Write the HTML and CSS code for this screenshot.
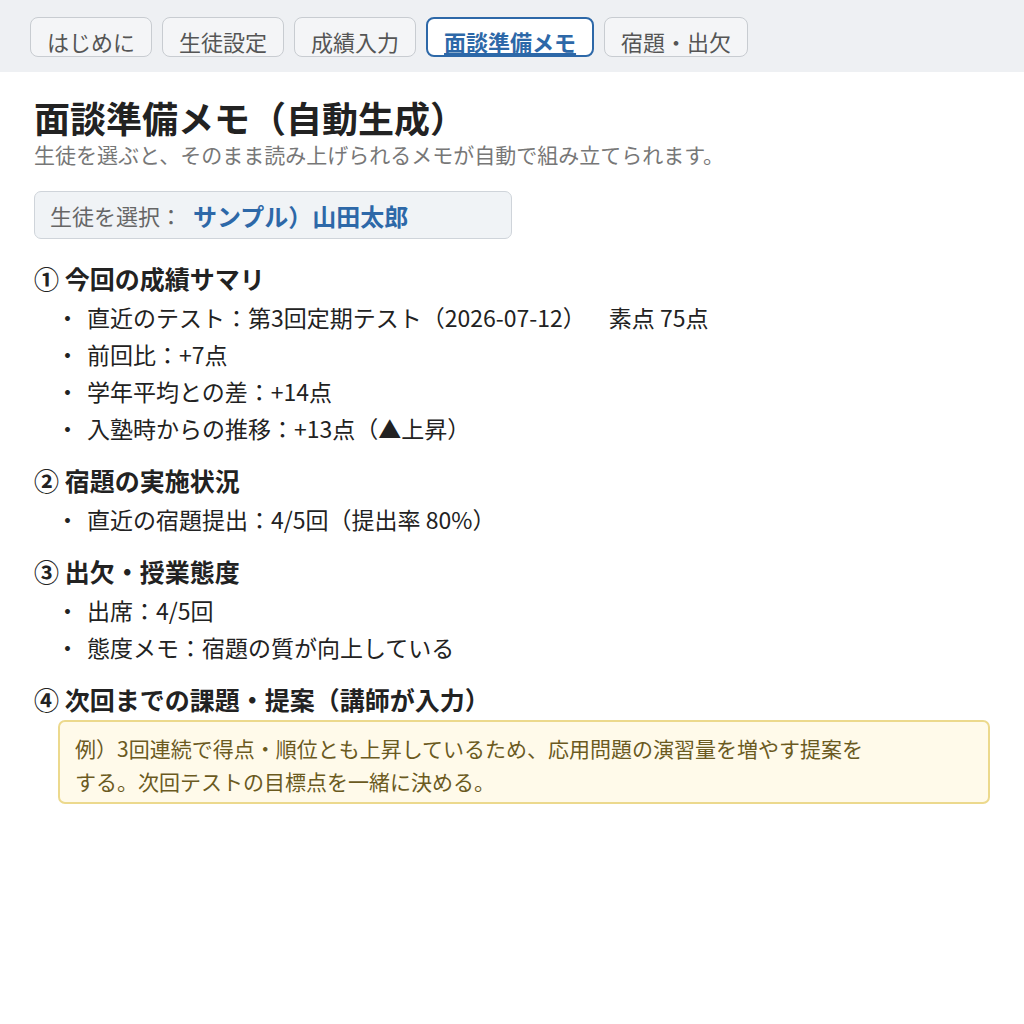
FILE: index.html
```html
<!DOCTYPE html>
<html lang="ja">
<head>
    <meta charset="UTF-8">
    <meta name="viewport" content="width=device-width, initial-scale=1.0">
    <title>面談準備メモ</title>
    <link rel="stylesheet" href="styles.css">
</head>
<body>
    <nav class="tabs">
        <a class="tab" href="#">はじめに</a>
        <a class="tab" href="#">生徒設定</a>
        <a class="tab" href="#">成績入力</a>
        <a class="tab active" href="#">面談準備メモ</a>
        <a class="tab" href="#">宿題・出欠</a>
    </nav>
    <main>
        <h1>面談準備メモ（自動生成）</h1>
        <p class="lead">生徒を選ぶと、そのまま読み上げられるメモが自動で組み立てられます。</p>

        <div class="picker">
            <span class="picker-label">生徒を選択：</span>
            <span class="picker-value">サンプル）山田太郎</span>
        </div>

        <section>
            <h2>① 今回の成績サマリ</h2>
            <ul>
                <li>直近のテスト：第3回定期テスト（2026-07-12）<span class="score">素点 75点</span></li>
                <li>前回比：+7点</li>
                <li>学年平均との差：+14点</li>
                <li>入塾時からの推移：+13点（▲上昇）</li>
            </ul>
        </section>

        <section>
            <h2>② 宿題の実施状況</h2>
            <ul>
                <li>直近の宿題提出：4/5回（提出率 80%）</li>
            </ul>
        </section>

        <section>
            <h2>③ 出欠・授業態度</h2>
            <ul>
                <li>出席：4/5回</li>
                <li>態度メモ：宿題の質が向上している</li>
            </ul>
        </section>

        <section>
            <h2>④ 次回までの課題・提案（講師が入力）</h2>
            <div class="note">例）3回連続で得点・順位とも上昇しているため、応用問題の演習量を増やす提案を<br>する。次回テストの目標点を一緒に決める。</div>
        </section>
    </main>
</body>
</html>
```

FILE: styles.css
```css
body {
    font-family: "Noto Sans CJK JP", "Noto Sans", sans-serif;
    margin: 0;
    padding: 0;
    background-color: #fff;
    color: #222;
}

.tabs {
    display: flex;
    gap: 10px;
    background-color: #eef0f3;
    padding: 17px 30px 15px;
}

.tab {
    display: block;
    height: 40px;
    box-sizing: border-box;
    padding: 9px 16px 0;
    font-size: 22px;
    line-height: 29px;
    color: #555;
    text-decoration: none;
    background-color: #f4f5f7;
    border: 1px solid #c8ccd1;
    border-radius: 8px;
}

.tab.active {
    border: 2px solid #2d68a8;
    padding: 8px 16px 0;
    background-color: #fff;
    color: #2d68a8;
    font-weight: bold;
    text-decoration: underline;
    text-underline-offset: 2px;
}

main {
    padding: 20px 34px;
}

h1 {
    font-size: 36px;
    line-height: 44px;
    margin: 3px 0 0;
}

.lead {
    font-size: 21px;
    line-height: 30px;
    color: #777;
    margin: 0 0 22px;
}

.picker {
    width: 478px;
    height: 48px;
    box-sizing: border-box;
    display: flex;
    align-items: center;
    gap: 11px;
    padding: 0 15px;
    background-color: #f0f3f6;
    border: 1px solid #cfd4da;
    border-radius: 7px;
}

.picker-label {
    font-size: 22px;
    color: #666;
}

.picker-value {
    font-size: 24px;
    color: #2d68a8;
    font-weight: bold;
}

section {
    margin-top: 22px;
}

section + section {
    margin-top: 16px;
}

h2 {
    font-size: 25px;
    line-height: 34px;
    margin: 0 0 4px;
}

ul {
    list-style: none;
    margin: 0;
    padding: 0 0 0 22px;
}

li {
    font-size: 23px;
    line-height: 37px;
}

li::before {
    content: "・";
    display: inline-block;
    width: 31px;
}

.score {
    margin-left: 23px;
}

.note {
    margin: 0 0 0 24px;
    padding: 10px 15px 4px;
    font-size: 21px;
    line-height: 33px;
    color: #6b5a1f;
    background-color: #fffaea;
    border: 2px solid #ecd98d;
    border-radius: 7px;
}
```
